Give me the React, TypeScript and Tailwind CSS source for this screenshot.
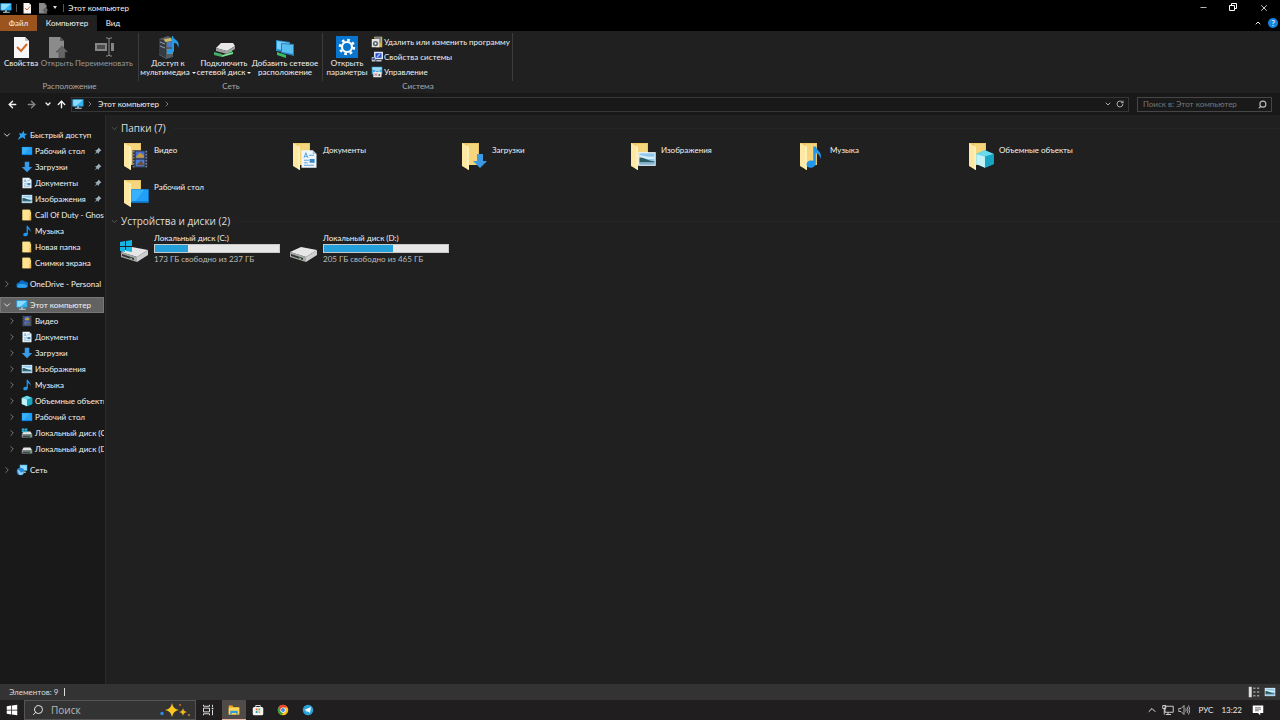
import { useState, type ReactNode } from 'react'
import { ArrowLeft, ArrowRight, ArrowUp, ChevronDown, ChevronRight, ChevronUp, Minus, RotateCw, Search, X } from 'lucide-react'

type IconProps = { className?: string }

function Svg({ className = 'size-3', children, box = 16 }: IconProps & { children: ReactNode; box?: number }) {
  return (
    <svg viewBox={`0 0 ${box} ${box}`} className={`shrink-0 ${className}`} aria-hidden="true">
      {children}
    </svg>
  )
}

const PcIcon = ({ className }: IconProps) => (
  <Svg className={className}>
    <path d="M1 2h14v9H1z" fill="#35b5f1" />
    <path d="M1 2h14L5 11H1z" fill="#8bdcff" />
    <path d="M1 2h14v9H1z" fill="none" stroke="#1c8ac6" strokeWidth=".8" />
    <path d="M7 11h2v2H7zM4 13h9v1.400H4z" fill="#b8d5e5" />
  </Svg>
)

const StarIcon = () => (
  <Svg>
    <path d="M10 2l1 4 4 .5-3.500 2.500 1 4.500L8.500 11 2 14.500 5.500 9 4 5.500l4 .5z" fill="#2da2f0" />
  </Svg>
)

const DesktopIcon = ({ className }: IconProps) => (
  <Svg className={className}>
    <path d="M1 2.500h14v11H1z" fill="#0d7fdc" />
    <path d="M1.500 3h13v9h-13z" fill="#22a0f5" />
    <path d="M1.500 3h10l-7 9h-3z" fill="#38b0fb" />
  </Svg>
)

const DownloadIcon = ({ className }: IconProps) => (
  <Svg className={className}>
    <path d="M5 1h6v7h4l-7 7-7-7h4z" fill="#3a9ae8" />
  </Svg>
)

const DocumentIcon = ({ className }: IconProps) => (
  <Svg className={className}>
    <path d="M2 1h9l3 3v11H2z" fill="#eef6fb" />
    <path d="M11 1v3h3z" fill="#a9c4d6" />
    <path d="M4 7l1.500-4L7 7M5 6h1.500" fill="none" stroke="#3b96d8" strokeWidth=".7" />
    <path d="M8 5h4M4 9h4M4 11h3M4 13h8" stroke="#68a5cf" strokeWidth=".8" />
    <path d="M8.500 8h4v3h-4z" fill="#3688c7" />
  </Svg>
)

const PictureIcon = ({ className }: IconProps) => (
  <Svg className={className}>
    <path d="M1 2.500h14v11H1z" fill="#e8f2fa" />
    <path d="M2 3.500h12v9H2z" fill="#8fc8ed" />
    <path d="M2 5c4 0 5 2 12 1v2H2z" fill="#d5eefa" />
    <path d="M2 7c3-1 5 2 12 3v1H2z" fill="#2b5e62" />
    <path d="M2 10.500h12v2H2z" fill="#8ab5cf" />
  </Svg>
)

const MusicIcon = ({ className }: IconProps) => (
  <Svg className={className}>
    <path d="M7.500 1h1.700c.4 2.500 5 4 3 8.500.2-2.500-1.300-3.500-3-4.200V12c0 4-6.200 4-6.200 1 0-2.200 2.500-3.200 4.500-2.300z" fill="#2196ec" />
  </Svg>
)

const FolderSmallIcon = () => (
  <Svg>
    <path d="M2 1h10.500v2l1 1v11H2z" fill="#fbd66c" />
    <path d="M2 1h9v14H2z" fill="#ffe391" />
    <path d="M11.500 9h2v6h-2z" fill="#e7b84c" />
  </Svg>
)

const CloudIcon = () => (
  <Svg>
    <path d="M4 13a3.500 3.500 0 010-7 4.500 4.500 0 018-1 4 4 0 011 8z" fill="#0c6cc4" />
    <path d="M4 13c-2 0-3-1.500-2-3.200 2-2.500 4-1.800 6-1.800 3 0 7 .5 6.500 3-.2 1.200-1 2-2.500 2z" fill="#2aa0f0" />
  </Svg>
)

const VideoIcon = ({ className }: IconProps) => (
  <Svg className={className}>
    <path d="M2 1h12v14H2z" fill="#2e3440" />
    <path d="M3 1.500v13M13 1.500v13" stroke="#8d97a6" strokeDasharray="1.200 1.200" />
    <path d="M4.500 2h7v5.500h-7z" fill="#496ed2" />
    <path d="M4.500 8.500h7V14h-7z" fill="#5080dd" />
    <path d="M5 6l3-3 3 2v2H5z" fill="#c29b3f" />
    <path d="M5 13l4-4 2.500 4z" fill="#68503c" />
  </Svg>
)

const CubeIcon = ({ className }: IconProps) => (
  <Svg className={className}>
    <path d="M1 4l7-3 7 3v8l-7 3-7-3z" fill="#22aec9" />
    <path d="M1 4l7-3 7 3-7 2z" fill="#69dbed" />
    <path d="M1 4l7 2v9l-7-3z" fill="#c2f3f9" />
    <path d="M8 6l7-2v8l-7 3z" fill="#18a5c4" />
  </Svg>
)

const DriveSmallIcon = ({ win }: { win?: boolean }) => (
  <Svg>
    <path d="M3.500 6h9l2.500 4H1z" fill="#e4e4e4" />
    <path d="M1 10h14v4H1z" fill="#92989a" />
    <path d="M2.500 11.500h11V13h-11z" fill="#292e2f" />
    <path d="M12 11.500h1.500V13H12z" fill="#5cda84" />
    {win && <path d="M1 2h3v2.500H1zM4.500 2h4v2.500h-4zM1 5h3v2H1zM4.500 5h4v2h-4z" fill="#29b5dc" />}
  </Svg>
)

const NetworkIcon = () => (
  <Svg>
    <path d="M5 1h10v8H5z" fill="#5bbceb" />
    <path d="M6 2h8v6H6z" fill="#97dcff" />
    <circle cx="6" cy="10" r="5" fill="#2789d8" />
    <path d="M2 8c3 0 3 2 4 3s4-1 4 1c-1 3-5 3-6 2z" fill="#8ed3f4" />
    <path d="M10 10h3v2h-3z" fill="#a8c0ce" />
  </Svg>
)

const PinIcon = () => (
  <Svg className="size-2">
    <path d="M9 1l6 6-2 .5-3 3-.5 3.500-3-3L1 15l4-5.500-3-3L5.500 6l3-3z" fill="#9cafbd" />
  </Svg>
)

const PropertiesIcon = ({ className }: IconProps) => (
  <Svg className={className} box={24}>
    <path d="M5 2h11l4 4v17H5z" fill="#f7f7f7" />
    <path d="M16 2v4h4z" fill="#c5c5c5" />
    <path d="M8 12l4 4 6-7" fill="none" stroke="#d56a2a" strokeWidth="2" />
  </Svg>
)

const OpenIcon = ({ className }: IconProps) => (
  <Svg className={className} box={24}>
    <path d="M4 2h11l4 4v17H4z" fill="#8b8b8b" />
    <path d="M15 2v4h4z" fill="#565656" />
    <path d="M14 23v-6h-3l6-6 6 6h-3v6z" fill="#666" stroke="#444" strokeWidth=".5" />
  </Svg>
)

const RenameIcon = () => (
  <Svg className="size-6" box={24}>
    <path d="M3 8h12v8H3zM19 8h3v8h-3z" fill="#858585" />
    <path d="M5 10h8v4H5z" fill="#4b4b4b" />
    <path d="M14 3h2l1 1 1-1h2M17 4v16M14 21h2l1-1 1 1h2" fill="none" stroke="#8b8b8b" />
  </Svg>
)

const MediaIcon = () => (
  <Svg className="size-6" box={24}>
    <path d="M3 4l9-3 5 2v19l-7 2-7-4z" fill="#545b63" />
    <path d="M3 4l7 2v17l-7-4z" fill="#343a41" />
    <path d="M4 7l5 2M4 11l5 2" stroke="#91a0ad" />
    <path d="M11 7h6v5h-6z" fill="#477bca" />
    <path d="M11 14h6v5h-6z" fill="#b18c48" />
    <path d="M8 4l7-1 1 3-7 1z" fill="#c9b865" />
    <path d="M17 1c0 4 8 4 5 12 0-4-2-5-4-5v8c-1 4-8 4-7 0 1-2 3-2 5-2V1z" fill="#249be7" />
  </Svg>
)

const MapDriveIcon = () => (
  <Svg className="size-6" box={24}>
    <path d="M9 8h12l2 3-8 5-11-3z" fill="#e8e8e8" />
    <path d="M4 13l11 3 8-5v3l-8 5-11-3z" fill="#9ca0a0" />
    <path d="M2 17l8 2v3l-8-2z" fill="#46ad66" />
    <path d="M10 20l11-3v2l-11 3z" fill="#7bdd92" />
    <path d="M17 17l3-1" stroke="#45dd76" strokeWidth="1.500" />
  </Svg>
)

const AddNetworkIcon = () => (
  <Svg className="size-6" box={24}>
    <path d="M3 5l14 2v11L3 16z" fill="#2b8fca" />
    <path d="M4 6l12 2v8L4 14z" fill="#79cffb" />
    <path d="M8 8l13 1v12L8 18z" fill="#277eb5" />
    <path d="M9 9l11 1v9L9 17z" fill="#59bef2" />
    <path d="M4 17l9 3v3l-9-3z" fill="#36bc62" />
  </Svg>
)

const SettingsIcon = () => (
  <Svg className="size-6" box={24}>
    <path d="M1 1h22v22H1z" fill="#0875cf" />
    <circle cx="12" cy="12" r="5" fill="none" stroke="#fff" strokeWidth="2.200" />
    <circle cx="12" cy="12" r="7" fill="none" stroke="#fff" strokeWidth="2.500" strokeDasharray="2.700 2.798" />
  </Svg>
)

const UninstallIcon = () => (
  <Svg>
    <path d="M4 1h11v14H7z" fill="#d6ae45" />
    <path d="M5 1h8v8H5z" fill="#76818b" />
    <path d="M1 4h10v11H1z" fill="#e5e5e5" />
    <circle cx="6" cy="10" r="3.500" fill="#59646c" />
    <circle cx="6" cy="10" r="1.300" fill="#fff" />
  </Svg>
)

const SystemIcon = () => (
  <Svg>
    <path d="M4 1h12v10H4z" fill="#dbe4f0" />
    <path d="M6 3h8v6H6z" fill="#2448c4" />
    <path d="M8 8l4-4" stroke="#9dc7ff" strokeWidth="2" />
    <path d="M1 8h5v6H1zM7 12h7v2H7z" fill="#bbc7d5" />
    <path d="M2 9h3v3H2z" fill="#354ca4" />
  </Svg>
)

const ManageIcon = () => (
  <Svg>
    <path d="M1 1h14v10H1z" fill="#48a9e2" />
    <path d="M2 2h12v3H2z" fill="#a6e1ff" />
    <path d="M3 8h11v7H3z" fill="#e2e5e8" />
    <path d="M6 8V6h5v2" fill="none" stroke="#ddd" />
    <path d="M5 10l3 3M8 10l-3 3" stroke="#c53e3e" />
    <path d="M10 11h2v2h-2z" fill="#303d4b" />
  </Svg>
)

function BigFolder({ children }: { children: ReactNode }) {
  return (
    <span className="relative block h-8 w-9 shrink-0">
      <Svg className="size-8" box={32}>
        <path d="M6 2h17v22H6z" fill="#edc767" />
        <path d="M11 3h11v21H11z" fill="#f5d67c" />
        <path d="M6 2l7 4v23l-2-1-5-3z" fill="#ffe8a2" />
        <path d="M11 5l2 1v23l-2-1z" fill="#fff0ba" />
      </Svg>
      <span className="absolute right-1 bottom-1">{children}</span>
    </span>
  )
}

function BigDrive({ win }: { win?: boolean }) {
  return (
    <Svg className="size-8" box={32}>
      <path d="M3 19l11-5 16 3-11 7z" fill="#e6e6e6" />
      <path d="M3 19l16 5v5L3 24z" fill="#a9a9a9" />
      <path d="M19 24l11-7v5l-11 7z" fill="#cfcfcf" />
      <path d="M4 21l12 4v2L4 23z" fill="#353535" />
      <path d="M12 25l2 .7" stroke="#64d97b" />
      {win && <path d="M2 9l5-1v5H2zM8 8l6-1v6H8zM2 14h5v5l-5-1zM8 14h6v5l-6-1z" fill="#17b5e5" />}
    </Svg>
  )
}

type NavItem = { name: string; icon: ReactNode; pinned?: boolean }

const quickItems: NavItem[] = [
  { name: 'Рабочий стол', icon: <DesktopIcon />, pinned: true },
  { name: 'Загрузки', icon: <DownloadIcon />, pinned: true },
  { name: 'Документы', icon: <DocumentIcon />, pinned: true },
  { name: 'Изображения', icon: <PictureIcon />, pinned: true },
  { name: 'Call Of Duty - Ghosts', icon: <FolderSmallIcon /> },
  { name: 'Музыка', icon: <MusicIcon /> },
  { name: 'Новая папка', icon: <FolderSmallIcon /> },
  { name: 'Снимки экрана', icon: <FolderSmallIcon /> },
]

const pcItems: NavItem[] = [
  { name: 'Видео', icon: <VideoIcon /> },
  { name: 'Документы', icon: <DocumentIcon /> },
  { name: 'Загрузки', icon: <DownloadIcon /> },
  { name: 'Изображения', icon: <PictureIcon /> },
  { name: 'Музыка', icon: <MusicIcon /> },
  { name: 'Объемные объекты', icon: <CubeIcon /> },
  { name: 'Рабочий стол', icon: <DesktopIcon /> },
  { name: 'Локальный диск (C:)', icon: <DriveSmallIcon win /> },
  { name: 'Локальный диск (D:)', icon: <DriveSmallIcon /> },
]

const folders = [
  { name: 'Видео', icon: <VideoIcon className="size-5" /> },
  { name: 'Документы', icon: <DocumentIcon className="size-5" /> },
  { name: 'Загрузки', icon: <DownloadIcon className="size-4" /> },
  { name: 'Изображения', icon: <PictureIcon className="size-5" /> },
  { name: 'Музыка', icon: <MusicIcon className="size-6" /> },
  { name: 'Объемные объекты', icon: <CubeIcon className="size-5" /> },
  { name: 'Рабочий стол', icon: <DesktopIcon className="size-5" /> },
]

const disks = [
  { name: 'Локальный диск (C:)', info: '173 ГБ свободно из 237 ГБ', used: 27, win: true },
  { name: 'Локальный диск (D:)', info: '205 ГБ свободно из 465 ГБ', used: 56, win: false },
]

function NavRoot({ name, icon, open, selected }: NavItem & { open?: boolean; selected?: boolean }) {
  return (
    <button
      className={`flex h-4 w-full items-center pl-0.5 text-left whitespace-nowrap ${
        selected ? 'bg-[#626262] outline outline-1 -outline-offset-1 outline-[#777]' : ''
      }`}
    >
      {open ? <ChevronDown size={10} className="mr-1 shrink-0" /> : <ChevronRight size={10} className="mr-1 shrink-0 text-[#888]" />}
      {icon}
      <span className="ml-0.5">{name}</span>
    </button>
  )
}

function NavChild({ name, icon, pinned, arrow }: NavItem & { arrow?: boolean }) {
  return (
    <button className="flex h-4 w-full items-center overflow-hidden pl-[7px] text-left whitespace-nowrap">
      <span className="w-3.5 shrink-0">{arrow && <ChevronRight size={10} className="text-[#888]" />}</span>
      {icon}
      <span className="ml-0.5">{name}</span>
      {pinned && <span className="mr-0.5 ml-auto"><PinIcon /></span>}
    </button>
  )
}

function RibbonButton({ icon, lines, muted, menu, className }: { icon: ReactNode; lines: string[]; muted?: boolean; menu?: boolean; className: string }) {
  return (
    <button className={`flex flex-col items-center pt-1 leading-[9px] whitespace-nowrap ${muted ? 'text-[#999]' : ''} ${className}`}>
      {icon}
      {lines.map((line, i) => (
        <span key={line}>
          {line}
          {menu && i === lines.length - 1 && <span className="ml-0.5 inline-block border-x-2 border-t-2 border-x-transparent border-t-current align-middle" />}
        </span>
      ))}
    </button>
  )
}

function RibbonGroup({ label, className, children }: { label: string; className: string; children: ReactNode }) {
  return (
    <section className={`relative flex flex-col ${className}`}>
      <div className="flex flex-1">{children}</div>
      <div className="mb-px h-3 text-center leading-3 text-[#aaa]">{label}</div>
      <span className="absolute top-0.5 right-0 h-12 w-px bg-[#3b3b3b]" />
    </section>
  )
}

function GroupHeading({ children }: { children: ReactNode }) {
  return (
    <h2 className="flex h-4 items-center font-['Open_Sans',sans-serif] text-[10px] whitespace-nowrap text-[#dedede]">
      <ChevronDown size={9} className="mr-0.5 text-[#666]" />
      {children}
      <span className="ml-2 h-px flex-1 bg-[#262626]" />
    </h2>
  )
}

function TitleBar() {
  return (
    <header className="flex h-[15px] items-center bg-black pt-px">
      <PcIcon />
      <span className="mx-1 h-2 w-px bg-[#555]" />
      <PropertiesIcon className="mr-1 size-3" />
      <OpenIcon className="size-3" />
      <span className="mx-1 h-1 border-x-2 border-t-3 border-x-transparent border-t-[#ddd]" />
      <span className="mr-1 ml-0.5 h-2 w-px bg-[#555]" />
      <h1>Этот компьютер</h1>
      <div className="ml-auto flex">
        <button aria-label="Свернуть" className="flex w-[30px] justify-center"><Minus size={9} /></button>
        <button aria-label="Восстановить" className="flex w-[30px] justify-center">
          <Svg className="size-2"><path d="M1 5h10v10H1zM5 5V1h10v10h-4" fill="none" stroke="white" strokeWidth="2" /></Svg>
        </button>
        <button aria-label="Закрыть" className="flex w-[32px] justify-center"><X size={10} /></button>
      </div>
    </header>
  )
}

function Ribbon() {
  return (
    <div className="flex h-[62px] bg-[#202020] text-[#f0f0f0]">
      <RibbonGroup label="Расположение" className="w-[139px]">
        <RibbonButton icon={<PropertiesIcon className="size-6" />} lines={['Свойства']} className="w-[42px]" />
        <RibbonButton icon={<OpenIcon className="size-6" />} lines={['Открыть']} muted className="w-[30px]" />
        <RibbonButton icon={<RenameIcon />} lines={['Переименовать']} muted className="w-[64px]" />
      </RibbonGroup>
      <RibbonGroup label="Сеть" className="w-[184px]">
        <RibbonButton icon={<MediaIcon />} lines={['Доступ к', 'мультимедиа']} menu className="w-[58px]" />
        <RibbonButton icon={<MapDriveIcon />} lines={['Подключить', 'сетевой диск']} menu className="w-[54px]" />
        <RibbonButton icon={<AddNetworkIcon />} lines={['Добавить сетевое', 'расположение']} className="w-[68px]" />
      </RibbonGroup>
      <RibbonGroup label="Система" className="w-[190px]">
        <RibbonButton icon={<SettingsIcon />} lines={['Открыть', 'параметры']} className="w-[48px]" />
        <div className="flex flex-col pt-[3px] whitespace-nowrap">
          <button className="flex h-[15px] items-center gap-px"><UninstallIcon />Удалить или изменить программу</button>
          <button className="flex h-[15px] items-center gap-px"><SystemIcon />Свойства системы</button>
          <button className="flex h-[15px] items-center gap-px"><ManageIcon />Управление</button>
        </div>
      </RibbonGroup>
    </div>
  )
}

function AddressBar() {
  const [query, setQuery] = useState('')
  return (
    <div className="flex h-[22px] items-center bg-[#191919] pr-2">
      <button aria-label="Назад" className="ml-[7px]"><ArrowLeft size={11} strokeWidth={3} /></button>
      <button aria-label="Вперёд" className="ml-2 text-[#888]"><ArrowRight size={11} strokeWidth={3} /></button>
      <button aria-label="Недавние" className="ml-[7px]"><ChevronDown size={8} strokeWidth={4} /></button>
      <button aria-label="Вверх" className="mx-1"><ArrowUp size={11} strokeWidth={3} /></button>
      <nav className="flex h-[15px] flex-1 items-center border border-[#363636]">
        <PcIcon />
        <ChevronRight size={8} className="mx-0.5 text-[#aaa]" />
        <button className="px-0.5">Этот компьютер</button>
        <ChevronRight size={8} className="ml-0.5 text-[#aaa]" />
        <button aria-label="Предыдущие" className="ml-auto text-[#aaa]"><ChevronDown size={8} strokeWidth={3} /></button>
        <button aria-label="Обновить" className="mx-1 text-[#aaa]"><RotateCw size={8} strokeWidth={3} /></button>
      </nav>
      <label className="ml-2 flex h-[15px] w-[135px] items-center border border-[#464646] pr-1 pl-[5px]">
        <input
          value={query}
          onChange={(e) => setQuery(e.target.value)}
          aria-label="Поиск"
          placeholder="Поиск в: Этот компьютер"
          className="min-w-0 flex-1 bg-transparent outline-none placeholder:text-[#777]"
        />
        <Search size={9} strokeWidth={3} className="-scale-x-100 text-[#bbb]" />
      </label>
    </div>
  )
}

function Taskbar() {
  return (
    <footer className="flex h-5 items-stretch bg-[#201e1e] text-[#e8e8e8]">
      <button aria-label="Пуск" className="flex w-6 items-center justify-center">
        <Svg><path d="M1 3l6-1v5.500H1zM8 2l7-1v6.500H8zM1 8.500h6V14l-6-1zM8 8.500h7V15l-7-1z" fill="white" /></Svg>
      </button>
      <label className="flex w-[172px] items-center border border-[#555] bg-[#333] pr-1 pl-[7px]">
        <Search size={12} className="-scale-x-100 shrink-0" />
        <input aria-label="Поиск в системе" placeholder="Поиск" className="ml-[7px] min-w-0 flex-1 bg-transparent font-['Open_Sans',sans-serif] text-[10px] outline-none placeholder:text-[#bbb]" />
        <svg viewBox="0 0 32 16" className="h-4 w-8 shrink-0" aria-hidden="true">
          <path d="M13 1q1 6 7 7-6 1-7 7-1-6-7-7 6-1 7-7z" fill="#ffc61f" />
          <path d="M24 6q.5 3.500 4 4-3.500.5-4 4-.5-3.500-4-4 3.500-.5 4-4z" fill="#efb527" />
          <circle cx="3" cy="11.500" r="1.700" fill="#308be4" />
          <circle cx="21" cy="3" r="1" fill="#c97425" />
          <circle cx="30" cy="13" r="1" fill="#ca8938" />
        </svg>
      </label>
      <button aria-label="Представление задач" className="flex w-6 items-center justify-center">
        <Svg><path d="M2 1v2h8V1M2 15v-2h8v2M2 5.500h8v5H2zM14 1v3M14 8v7" fill="none" stroke="#eee" strokeWidth="1.200" /><path d="M13 5h2v2h-2z" fill="white" /></Svg>
      </button>
      <button aria-label="Проводник" className="ml-0.5 flex w-6 items-center justify-center border-b border-[#e9b6a3] bg-[#504b48]">
        <Svg><path d="M1 2h5l1 2h8v10H1z" fill="#e9ad26" /><path d="M1 5h14v9H1z" fill="#ffd75b" /><path d="M3 9h10v5h-2v-2H5v2H3z" fill="#349bd6" /></Svg>
      </button>
      <button aria-label="Магазин" className="flex w-6 items-center justify-center">
        <Svg><path d="M5 4V2h6v2" fill="none" stroke="#ddd" strokeWidth="1.300" /><rect x="1" y="4" width="14" height="11" rx="2" fill="#f3f3f3" /><path d="M5 6h2.500v2.500H5z" fill="#ef6540" /><path d="M8.500 6H11v2.500H8.500z" fill="#74b84a" /><path d="M5 9.500h2.500V12H5z" fill="#229fda" /><path d="M8.500 9.500H11V12H8.500z" fill="#f0ba2b" /></Svg>
      </button>
      <button aria-label="Chrome" className="flex w-[26px] items-center justify-center">
        <Svg>
          <circle cx="8" cy="8" r="7" fill="#fbc116" />
          <path d="M2 4.500A7 7 0 0114 4.500H8L5 10z" fill="#e84435" />
          <path d="M2 4.500L5 10l3 1.500-1.500 3.300A7 7 0 012 4.500z" fill="#2ba14b" />
          <circle cx="8" cy="8" r="3.500" fill="white" /><circle cx="8" cy="8" r="2.600" fill="#4285e8" />
        </Svg>
      </button>
      <button aria-label="Telegram" className="flex w-6 items-center justify-center">
        <Svg><circle cx="8" cy="8" r="7" fill="#2aa1da" /><path d="M3 8l9-4-1.500 8-3-2.200L6 11V9z" fill="white" /></Svg>
      </button>
      <div className="ml-auto flex items-center">
        <button aria-label="Значки"><ChevronUp size={12} /></button>
        <Svg className="ml-1 size-3"><path d="M4 3h11v8H4zM8 11v3M5 14h7M1 2h4v4H1zM3 6v8" fill="none" stroke="#ddd" strokeWidth="1.200" /></Svg>
        <Svg className="ml-1 size-3"><path d="M1 6h3l4-4v12l-4-4H1zM10 6q2 2 0 4M12 4q3 4 0 8M14 2q4 6 0 12" fill="none" stroke="#ddd" /></Svg>
        <span className="ml-2">РУС</span>
        <time className="ml-2">13:22</time>
        <button aria-label="Уведомления" className="mr-4 ml-2.5">
          <Svg><path d="M1 2h14v10h-4v3l-3-3H1z" fill="white" /><path d="M4 5h8M4 7h8M4 9h5" stroke="#555" /></Svg>
        </button>
      </div>
    </footer>
  )
}

export default function App() {
  return (
    <div className="flex min-h-screen flex-col bg-[#202020] font-[Lato,'Liberation_Sans',sans-serif] text-[8px] leading-[10px] text-[#f2f2f2]">
      <TitleBar />
      <div className="flex h-4 items-stretch bg-black">
        <button className="w-[37px] bg-[#9b541d]">Файл</button>
        <button className="w-[60px] bg-[#202020]">Компьютер</button>
        <button className="w-8">Вид</button>
        <button aria-label="Свернуть ленту" className="ml-auto"><ChevronUp size={8} strokeWidth={3} /></button>
        <button aria-label="Справка" className="my-auto mr-0.5 ml-1.5 size-2.5 rounded-full bg-[#1685df] font-bold">?</button>
      </div>
      <Ribbon />
      <AddressBar />
      <div className="flex flex-1">
        <aside className="w-[106px] shrink-0 border-r border-[#2b2b2b] bg-[#191919] pt-3 pr-px">
          <div className="flex flex-col gap-[5px]">
            <div>
              <NavRoot name="Быстрый доступ" icon={<StarIcon />} open />
              {quickItems.map((item) => <NavChild key={item.name} {...item} />)}
            </div>
            <NavRoot name="OneDrive - Personal" icon={<CloudIcon />} />
            <div>
              <NavRoot name="Этот компьютер" icon={<PcIcon />} open selected />
              {pcItems.map((item) => <NavChild key={item.name} {...item} arrow />)}
            </div>
            <NavRoot name="Сеть" icon={<NetworkIcon />} />
          </div>
        </aside>
        <main className="min-w-0 flex-1 pt-[5px] pl-1">
          <GroupHeading>Папки (7)</GroupHeading>
          <div className="grid grid-cols-[repeat(auto-fill,169px)] gap-y-[5px] pt-[5px] pb-[3px] pl-2">
            {folders.map((folder) => (
              <button key={folder.name} className="flex h-8 text-left">
                <BigFolder>{folder.icon}</BigFolder>
                <span className="pt-1">{folder.name}</span>
              </button>
            ))}
          </div>
          <GroupHeading>Устройства и диски (2)</GroupHeading>
          <div className="grid grid-cols-[repeat(auto-fill,169px)] pt-1 pl-2">
            {disks.map((disk) => (
              <button key={disk.name} className="flex text-left">
                <span className="w-9 shrink-0"><BigDrive win={disk.win} /></span>
                <span className="block w-[126px]">
                  <span className="block">{disk.name}</span>
                  <span className="my-px block h-[9px] border border-[#c9c9c9] bg-[#e6e6e6]">
                    <span className="block h-full bg-[#26a0da]" style={{ width: `${disk.used}%` }} />
                  </span>
                  <span className="block text-[#bbb]">{disk.info}</span>
                </span>
              </button>
            ))}
          </div>
        </main>
      </div>
      <div className="flex h-4 items-center bg-[#333] pr-1 pl-[9px] text-[#ddd]">
        <span>Элементов: 9</span>
        <span className="ml-1.5 h-2 w-px bg-[#ddd]" />
        <button aria-label="Таблица" className="ml-auto">
          <Svg><path d="M1 1h4v14H1z" fill="#ddd" /><path d="M7 3h3M12 3h3M7 8h3M12 8h3M7 13h3M12 13h3" stroke="#999" strokeWidth="2" /></Svg>
        </button>
        <button aria-label="Крупные значки" className="ml-1"><PictureIcon /></button>
      </div>
      <Taskbar />
    </div>
  )
}
